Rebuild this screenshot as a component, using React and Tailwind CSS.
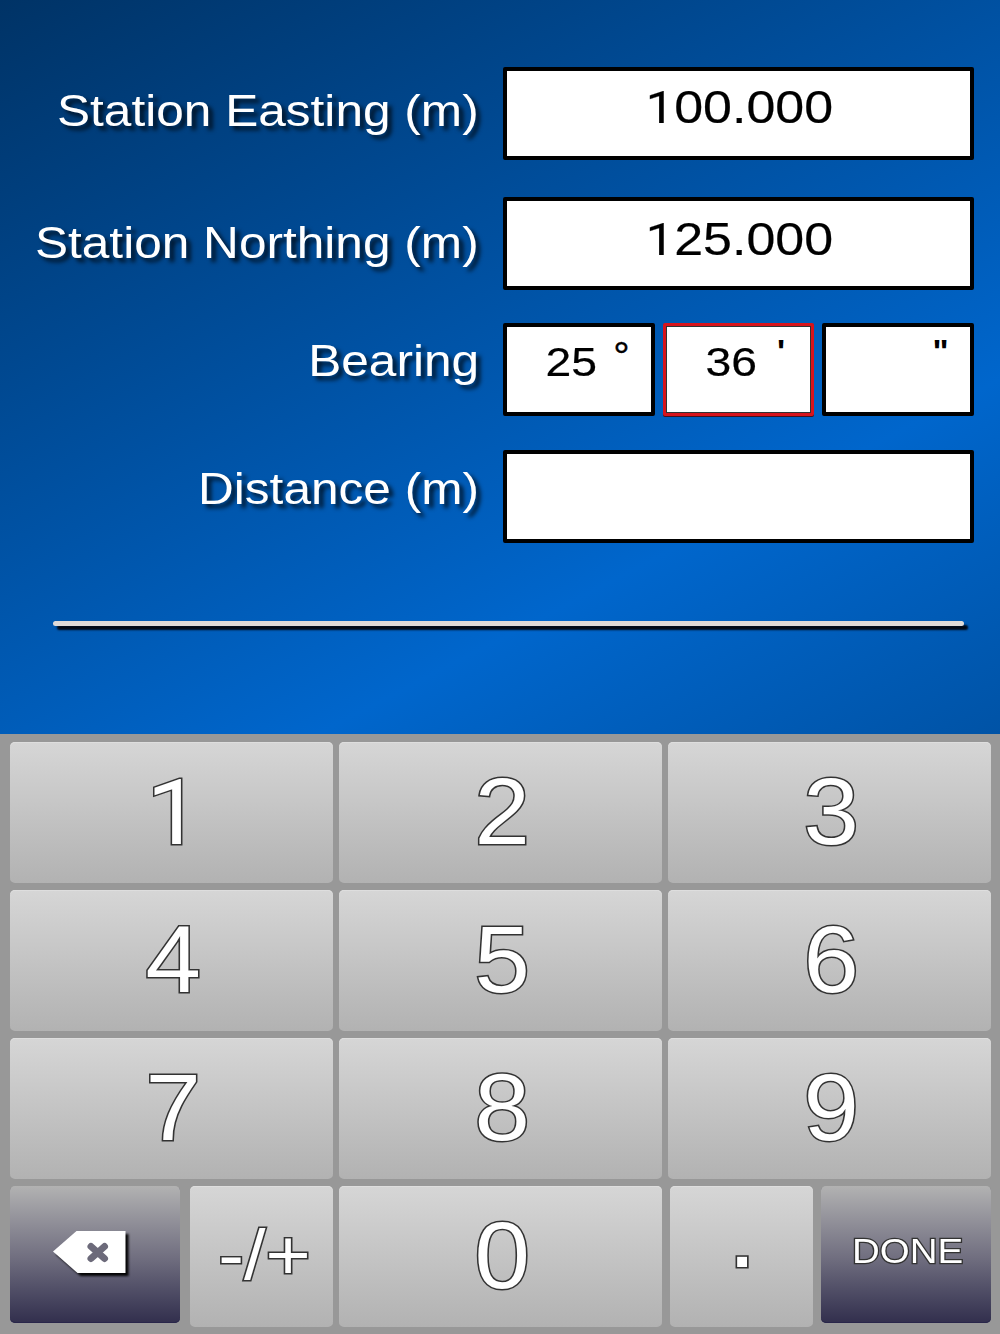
import { useState } from 'react';
import clsx from 'clsx';

const keyLook = 'rounded-[5px] bg-linear-to-b from-[#d6d6d6] to-[#b2b2b2] shadow-[inset_0_1px_0_#dedede]';
const darkKeyLook =
  'rounded-[5px] bg-linear-to-b from-[#b2b2b2] via-[#716f80] via-52% to-[#322f4d] shadow-[inset_0_-1px_0_#29264a]';
const outlined = 'text-white [-webkit-text-stroke:3px_#333] [paint-order:stroke_fill]';

// The "1" is set in a face without a foot serif, in the same advance width.
function Digits({ text }) {
  return text.split('').map((ch, i) =>
    ch === '1' ? (
      <span
        key={i}
        className="inline-block w-[0.573em] text-right font-[Roboto,sans-serif] text-[0.97em] leading-none"
      >
        1
      </span>
    ) : (
      <span key={i}>{ch}</span>
    )
  );
}

function Label({ children, className }) {
  return (
    <div className="w-[479px] text-right">
      <span
        className={clsx(
          'inline-block origin-right scale-x-[1.102] whitespace-nowrap text-[45px] text-white [text-shadow:4px_4px_4px_rgba(0,0,0,0.75)]',
          className
        )}
      >
        {children}
      </span>
    </div>
  );
}

function Field({ value, className, onClick }) {
  return (
    <button
      onClick={onClick}
      className="flex h-[93px] w-[471px] items-start justify-center rounded-[2px] border-4 border-black bg-white"
    >
      <span
        className={clsx(
          'inline-block scale-x-[1.13] pl-px text-[46px] text-black [-webkit-text-stroke:0.2px_#000]',
          className
        )}
      >
        <Digits text={value} />
      </span>
    </button>
  );
}

function AngleField({ value, unit, active, onClick }) {
  return (
    <button
      onClick={onClick}
      className={clsx(
        'flex h-[93px] w-[151.5px] items-start rounded-[2px] bg-white text-black',
        active
          ? 'border-3 border-[#d8141c] p-px shadow-[inset_0_0_0_1px_#333,0_1px_0_#401020]'
          : 'border-4 border-black'
      )}
    >
      <span className="w-[90px] origin-right scale-x-[1.13] text-right text-[41px] leading-[70px] [-webkit-text-stroke:0.2px_#000]">
        {value}
      </span>
      <span
        className={clsx(
          'w-[49px] text-center',
          unit === '°' ? 'text-[41px] leading-[58px] [-webkit-text-stroke:0.4px_#000]' : 'text-[34px] leading-[49px] font-bold'
        )}
      >
        {unit}
      </span>
    </button>
  );
}

function DigitKey({ digit, onPress }) {
  return (
    <button onClick={() => onPress(digit)} className={clsx('flex h-[141px] w-[323px] justify-center pl-[3px]', keyLook)}>
      <span className={clsx('inline-block scale-x-[1.06] text-[94px] leading-[139px]', outlined)}>
        <Digits text={digit} />
      </span>
    </button>
  );
}

function BackspaceIcon() {
  return (
    <svg
      width="76"
      height="46"
      viewBox="0 0 76 46"
      className="overflow-visible drop-shadow-[3px_3px_1px_rgba(0,0,0,0.95)]"
    >
      <path d="M0 20.5L23.5 0H72.5V42H24.5Z" fill="#fff" />
      <path d="M38 15.5L51.5 27.5M51.5 15.5L38 27.5" stroke="#6c6a7a" strokeWidth="7" strokeLinecap="round" />
    </svg>
  );
}

export default function App() {
  const [easting] = useState('100.000');
  const [northing] = useState('125.000');
  const [bearing, setBearing] = useState(['25', '36', '']);
  const [active, setActive] = useState(1);

  const updateActive = (fn) => {
    setBearing((prev) => prev.map((v, i) => (i === active ? fn(v) : v)));
  };

  const press = (digit) => updateActive((v) => (v.length < 2 ? v + digit : v));

  return (
    <div className="flex h-[1334px] w-[1000px] flex-col overflow-hidden bg-[linear-gradient(152.5deg,#003366_0%,#0066cc_48.5%,#003366_100%)] font-['Liberation_Sans',Arial,sans-serif]">
      <div className="flex h-[734px] flex-col pt-[67px]">
        <div className="flex h-[130px] items-start gap-[24px]">
          <Label className="leading-[87px]">Station Easting (m)</Label>
          <Field value={easting} className="leading-[73px]" />
        </div>
        <div className="flex h-[126px] items-start gap-[24px]">
          <Label className="leading-[91px]">Station Northing (m)</Label>
          <Field value={northing} className="leading-[77px]" />
        </div>
        <div className="flex h-[127px] items-start gap-[24px]">
          <Label className="leading-[75px]">Bearing</Label>
          <div className="flex gap-[8px]">
            {['°', "'", '"'].map((unit, i) => (
              <AngleField
                key={unit}
                unit={unit}
                value={bearing[i]}
                active={active === i}
                onClick={() => setActive(i)}
              />
            ))}
          </div>
        </div>
        <div className="flex h-[93px] items-start gap-[24px]">
          <Label className="leading-[77px]">Distance (m)</Label>
          <Field value="" />
        </div>
        <div className="mt-[78px] ml-[53px] h-[5px] w-[911px] rounded-full bg-[#dedad8] shadow-[4px_4px_2px_#000814]" />
      </div>

      <div className="flex h-[600px] flex-col gap-[7px] bg-[#989898] pt-[8px] pl-[10px]">
        {[['1', '2', '3'], ['4', '5', '6'], ['7', '8', '9']].map((row) => (
          <div key={row[0]} className="flex gap-[6px]">
            {row.map((digit) => (
              <DigitKey key={digit} digit={digit} onPress={press} />
            ))}
          </div>
        ))}
        <div className="flex items-start">
          <button
            onClick={() => updateActive((v) => v.slice(0, -1))}
            className={clsx('flex h-[137px] w-[170px] pt-[45px] pl-[43px]', darkKeyLook)}
          >
            <BackspaceIcon />
          </button>
          <button className={clsx('ml-[10px] flex h-[141px] w-[143px] justify-center pl-[5px]', keyLook)}>
            <span className={clsx('inline-block scale-x-[1.09] text-[71px] leading-[137px]', outlined)}>-/+</span>
          </button>
          <div className="ml-[6px]">
            <DigitKey digit="0" onPress={press} />
          </div>
          <button className={clsx('ml-[8px] flex h-[141px] w-[143px] justify-center pl-[2px]', keyLook)}>
            <span className={clsx('inline-block scale-x-[1.1] text-[94px] leading-[98px]', outlined)}>.</span>
          </button>
          <button className={clsx('ml-[8px] flex h-[137px] w-[170px] justify-center pl-[4px]', darkKeyLook)}>
            <span className="inline-block scale-x-[1.1] text-[35px] leading-[130px] text-white [-webkit-text-stroke:2.5px_#333] [paint-order:stroke_fill]">
              DONE
            </span>
          </button>
        </div>
      </div>
    </div>
  );
}
